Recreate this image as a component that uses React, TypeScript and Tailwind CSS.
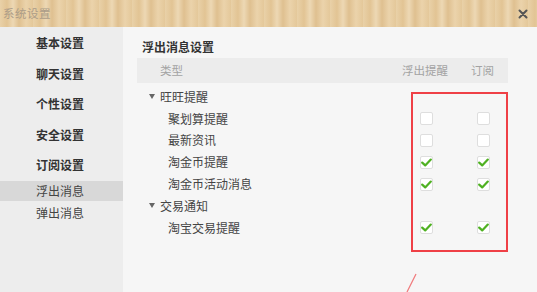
import React from 'react';

const font = { fontFamily: '"Noto Sans CJK SC", "Noto Sans", sans-serif' };

type Row = { label: string; group?: boolean; a?: boolean; b?: boolean };

const rows: Row[] = [
  { label: '旺旺提醒', group: true },
  { label: '聚划算提醒', a: false, b: false },
  { label: '最新资讯', a: false, b: false },
  { label: '淘金币提醒', a: true, b: true },
  { label: '淘金币活动消息', a: true, b: true },
  { label: '交易通知', group: true },
  { label: '淘宝交易提醒', a: true, b: true },
];

const navTop = ['基本设置', '聊天设置', '个性设置', '安全设置', '订阅设置'];

function Check({ on }: { on: boolean }) {
  return (
    <div className="w-[13px] h-[13px] rounded-[2px] border border-[#dedede] bg-white flex items-center justify-center">
      {on && (
        <svg width="11" height="9" viewBox="0 0 11 9">
          <path d="M1.2 4.6 L4.2 7.4 L9.8 1.6" fill="none" stroke="#4fb122" strokeWidth="2.2" strokeLinecap="round" strokeLinejoin="round" />
        </svg>
      )}
    </div>
  );
}

export default function App() {
  return (
    <div className="w-[537px] h-[292px] overflow-hidden flex flex-col bg-[#f6f6f6] relative" style={font}>
      {/* Title bar */}
      <div className="h-[27px] shrink-0 flex items-center justify-between pl-[3px] pr-[9px] bg-[#e6cb9f] bg-[repeating-linear-gradient(90deg,#e9d1a8_0px,#e2c494_7px,#edd8b4_13px,#dfc090_19px,#ebd3ab_26px,#e4c89a_33px)]">
        <span className="text-[11.5px] leading-none text-[#ab9c88] tracking-[0.5px]">系统设置</span>
        <svg width="10" height="10" viewBox="0 0 10 10">
          <path d="M1.5 1.5 L8.5 8.5 M8.5 1.5 L1.5 8.5" stroke="#555" strokeWidth="2" strokeLinecap="round" />
        </svg>
      </div>

      <div className="flex flex-1">
        {/* Sidebar */}
        <div className="w-[123px] shrink-0 bg-[#ededed] pt-[1px] flex flex-col">
          {navTop.map((n) => (
            <div key={n} className="h-[30.5px] flex items-center justify-center pr-[3px] text-[12px] font-bold text-[#333]">
              {n}
            </div>
          ))}
          <div className="h-[20px] flex items-center justify-center pr-[3px] bg-[#d8d8d8] text-[12px] text-[#444]">浮出消息</div>
          <div className="h-[24px] flex items-center justify-center pr-[3px] text-[12px] text-[#444]">弹出消息</div>
        </div>

        {/* Main */}
        <div className="flex-1 pt-[12px] pl-[14px] pr-[29px]">
          <div className="h-[16px] flex items-center pl-[5px] text-[12px] font-bold text-[#333]">浮出消息设置</div>
          <div className="mt-[3px] h-[25px] bg-[#ececec] flex items-center text-[11.5px] text-[#a3a3a3]">
            <span className="pl-[23px] flex-1">类型</span>
            <span className="w-[60px] text-center pr-[21px] whitespace-nowrap">浮出提醒</span>
            <span className="w-[46px] text-center pr-[5px]">订阅</span>
          </div>
          <div className="mt-[3px]">
            {rows.map((r) => (
              <div key={r.label} className="h-[21.8px] flex items-center text-[12px] text-[#444]">
                {r.group ? (
                  <div className="flex items-center pl-[12px]">
                    <svg width="6" height="5" viewBox="0 0 6 5" className="mr-[5px]">
                      <path d="M0 0 L6 0 L3 5 Z" fill="#666" />
                    </svg>
                    <span>{r.label}</span>
                  </div>
                ) : (
                  <>
                    <span className="pl-[31px] flex-1">{r.label}</span>
                    <div className="w-[60px] flex justify-center pr-[11px]">
                      <Check on={!!r.a} />
                    </div>
                    <div className="w-[46px] flex justify-center pr-[3px]">
                      <Check on={!!r.b} />
                    </div>
                  </>
                )}
              </div>
            ))}
          </div>
        </div>
      </div>

      {/* Red annotation box */}
      <div className="absolute left-[411px] top-[92px] w-[97px] h-[160px] border-2 border-[#ef4046]" />
      <svg className="absolute left-[400px] top-[270px]" width="20" height="22" viewBox="0 0 20 22">
        <path d="M16 4 L7 22" stroke="#f07a7c" strokeWidth="1.2" />
      </svg>
    </div>
  );
}
